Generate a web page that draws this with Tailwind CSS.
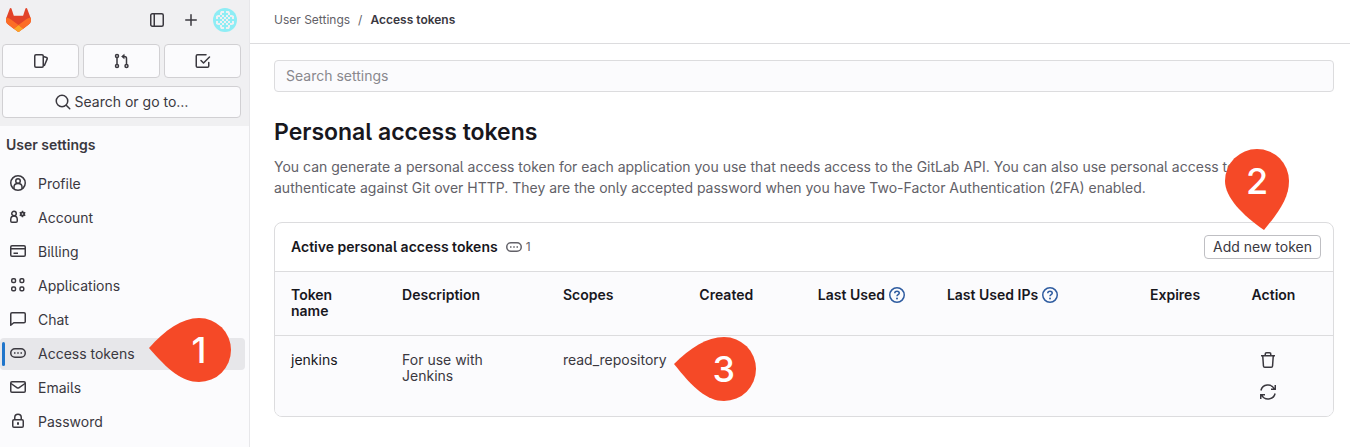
<!DOCTYPE html>
<html lang="en">
<head>
<meta charset="utf-8">
<meta name="viewport" content="width=device-width, initial-scale=1">
<title>Access tokens · User Settings · GitLab</title>
<script src="https://cdn.jsdelivr.net/npm/@tailwindcss/browser@4"></script>
</head>
<body class="bg-white font-['Inter','Liberation_Sans',sans-serif] text-sm text-[#3a383f] [font-feature-settings:'cv05']">
<div class="flex min-h-screen">

  <aside class="w-[250px] shrink-0 border-r border-[#e7e7ea] bg-[#fbfbfd]">
    <div class="flex flex-col gap-2 bg-[#f0f0f2] px-0.5 pr-2 pb-2">
      <div class="flex h-9 items-center gap-[18px] pt-1 pr-1 pl-1">
        <a href="#" aria-label="GitLab home" class="mr-auto">
          <svg class="h-6 w-[25px]" viewBox="0 0 25 24"><path d="m24.507 9.5-.034-.09L21.082.562a.896.896 0 0 0-1.694.091l-2.29 7.01H7.825L5.535.653a.898.898 0 0 0-1.694-.09L.451 9.411.416 9.5a6.297 6.297 0 0 0 2.09 7.278l.012.01.03.022 5.16 3.867 2.56 1.935 1.554 1.176a1.051 1.051 0 0 0 1.268 0l1.555-1.176 2.56-1.935 5.197-3.89.014-.01A6.297 6.297 0 0 0 24.507 9.5Z" fill="#E24329"/><path d="m24.507 9.5-.034-.09a11.44 11.44 0 0 0-4.56 2.051l-7.447 5.632 4.742 3.584 5.197-3.89.014-.01A6.297 6.297 0 0 0 24.507 9.5Z" fill="#FC6D26"/><path d="m7.707 20.677 2.56 1.935 1.555 1.176a1.051 1.051 0 0 0 1.268 0l1.555-1.176 2.56-1.935-4.743-3.584-4.755 3.584Z" fill="#FCA326"/><path d="M5.01 11.461a11.43 11.43 0 0 0-4.56-2.05L.416 9.5a6.297 6.297 0 0 0 2.09 7.278l.012.01.03.022 5.16 3.867 4.745-3.584-7.444-5.632Z" fill="#FC6D26"/></svg>
        </a>
        <button type="button" aria-label="Hide sidebar"><svg class="size-4" viewBox="0 0 16 16" fill="none" stroke="currentColor" stroke-width="1.5"><rect x="1.75" y="1.75" width="12.5" height="12.5" rx="1.5"/><path d="M5.25 2v12"/></svg></button>
        <button type="button" aria-label="Create new"><svg class="size-4" viewBox="0 0 16 16" fill="none" stroke="currentColor" stroke-width="1.5" stroke-linecap="round"><path d="M8 2.75v10.5M2.75 8h10.5"/></svg></button>
        <button type="button" aria-label="User menu" class="-ml-1">
          <svg class="size-6 rounded-full" viewBox="0 0 24 24"><path fill="#8eedf5" d="M0 0h24v24H0z"/><g fill="#f0f0f2"><path d="M8 3h3v2H9v2H7V5zM13 3h3l1 2v2h-2V5h-2zM8 21h3v-2H9v-2H7v2zM13 21h3l1-2v-2h-2v2h-2zM3 8v3h2V9h2V7H5zM3 16v-3h2v2h2v2H5zM21 8v3h-2V9h-2V7h2zM21 16v-3h-2v2h-2v2h2z"/><path d="M9 7h2v2H9zM13 7h2v2h-2zM9 15h2v2H9zM13 15h2v2h-2zM7 9h2v2H7zM15 9h2v2h-2zM7 13h2v2H7zM15 13h2v2h-2zM11 9h2v2h-2zM11 13h2v2h-2zM9 11h2v2H9zM13 11h2v2h-2z"/></g></svg>
        </button>
      </div>
      <div class="grid grid-cols-3 gap-1">
        <button type="button" aria-label="Issues" class="flex h-[34px] items-center justify-center rounded border border-[#d1d0d3] bg-[#fbfbfd]"><svg class="size-4" viewBox="0 0 16 16" fill="none" stroke="currentColor" stroke-width="1.5" stroke-linejoin="round"><rect x="1.75" y="1.75" width="8.5" height="12.5" rx="1.2"/><path d="m10.500 3.500 3 1c.6.2.9.8.7 1.400L11.200 13"/></svg></button>
        <button type="button" aria-label="Merge requests" class="flex h-[34px] items-center justify-center rounded border border-[#d1d0d3] bg-[#fbfbfd]"><svg class="size-4" viewBox="0 0 16 16" fill="none" stroke="currentColor" stroke-width="1.5"><circle cx="3" cy="3" r="1.500"/><circle cx="3" cy="13" r="1.500"/><circle cx="12.500" cy="13" r="1.500"/><path d="M3 4.500v7M12.500 11.500V5.500c0-1.100-.9-2-2-2H8.500"/><path d="M10.250 1.250v4.500L7.500 3.500Z" fill="currentColor" stroke-width=".5"/></svg></button>
        <button type="button" aria-label="To-do list" class="flex h-[34px] items-center justify-center rounded border border-[#d1d0d3] bg-[#fbfbfd]"><svg class="size-4" viewBox="0 0 16 16" fill="none" stroke="currentColor" stroke-width="1.5" stroke-linecap="round" stroke-linejoin="round"><path d="M11 1.750H2.500A1.250 1.250 0 0 0 1.250 3v10c0 .7.550 1.250 1.250 1.250h10c.7 0 1.250-.550 1.250-1.250V9.500M6 7.500l2.500 2.500L14.500 4"/></svg></button>
      </div>
      <button type="button" class="flex h-8 items-center justify-center gap-1 rounded border border-[#d1d0d3] bg-[#fbfbfd]"><svg class="size-4" viewBox="0 0 16 16" fill="none" stroke="currentColor" stroke-width="1.5" stroke-linecap="round"><circle cx="7" cy="7" r="5.750"/><path d="m11.250 11.250 3.500 3.500"/></svg>Search or go to…</button>
    </div>

    <nav aria-labelledby="nav-title" class="pr-1">
      <h2 id="nav-title" class="px-1.5 pt-[9px] pb-[13px] leading-5 font-semibold">User settings</h2>
      <ul class="flex flex-col gap-0.5">
        <li><a href="#" class="flex h-8 items-center gap-3 rounded px-2.5"><svg class="mb-0.5 size-4" viewBox="0 0 16 16" fill="none" stroke="currentColor" stroke-width="1.5"><circle cx="8" cy="8" r="7.250"/><circle cx="8" cy="6" r="2.250"/><path d="M4 13.750V12c0-2 1.500-3.500 4-3.500s4 1.500 4 3.500v1.750"/></svg>Profile</a></li>
        <li><a href="#" class="flex h-8 items-center gap-3 rounded px-2.5"><svg class="mb-0.5 size-4" viewBox="0 0 16 16" fill="none" stroke="currentColor" stroke-width="1.5"><circle cx="4" cy="4.500" r="2.250"/><path d="M4 7c-2 0-3.250 1.400-3.250 3.500v1.500c0 .7.550 1.250 1.250 1.250h4c.7 0 1.250-.550 1.250-1.250v-1.500C7.250 8.400 6 7 4 7Z"/><circle cx="12.500" cy="5" r="1.700" stroke-width="1.800"/><path stroke-width="1.500" d="M12.500 1.750v1.500M12.500 6.750v1.500M9.700 3.400l1.300.7M14 5.900l1.300.7M9.700 6.600l1.300-.7M14 4.100l1.300-.7"/></svg>Account</a></li>
        <li><a href="#" class="flex h-8 items-center gap-3 rounded px-2.5"><svg class="mb-0.5 size-4" viewBox="0 0 16 16" fill="none" stroke="currentColor" stroke-width="1.5"><rect x=".75" y="2.750" width="14.500" height="10.500" rx="1.250"/><path d="M1 5.750h14M3.500 10.250H8"/></svg>Billing</a></li>
        <li><a href="#" class="flex h-8 items-center gap-3 rounded px-2.5"><svg class="mb-0.5 size-4" viewBox="0 0 16 16" fill="none" stroke="currentColor" stroke-width="1.5"><rect x="1.750" y="1.750" width="3.750" height="3.750" rx="1.250"/><rect x="10" y="1.750" width="3.750" height="3.750" rx="1.250"/><rect x="1.750" y="10" width="3.750" height="3.750" rx="1.250"/><rect x="10" y="10" width="3.750" height="3.750" rx="1.250"/></svg>Applications</a></li>
        <li><a href="#" class="flex h-8 items-center gap-3 rounded px-2.5"><svg class="mb-0.5 size-4" viewBox="0 0 16 16" fill="none" stroke="currentColor" stroke-width="1.5" stroke-linejoin="round"><path d="M.750 14.250V3c0-.7.550-1.250 1.250-1.250h12c.7 0 1.250.550 1.250 1.250v7.500c0 .7-.550 1.250-1.250 1.250H3.750Z"/></svg>Chat</a></li>
        <li><a href="#" aria-current="page" class="relative flex h-8 items-center gap-3 rounded bg-[#e7e7ea] px-2.5"><span class="absolute inset-y-1 left-0.5 w-[3px] rounded bg-[#1f75cb]"></span><svg class="mb-0.5 size-4" viewBox="0 0 16 16" fill="none" stroke="currentColor" stroke-width="1.5"><rect x=".75" y="3.750" width="14.500" height="8.500" rx="4.250"/><path d="M4 8h1.500M7.250 8h1.500M10.500 8H12"/></svg>Access tokens</a></li>
        <li><a href="#" class="flex h-8 items-center gap-3 rounded px-2.5"><svg class="mb-0.5 size-4" viewBox="0 0 16 16" fill="none" stroke="currentColor" stroke-width="1.5" stroke-linejoin="round"><rect x=".75" y="2.750" width="14.500" height="10.500" rx="1.250"/><path d="M1 4.500 7.200 8.800c.5.300 1.100.3 1.600 0L15 4.500"/></svg>Emails</a></li>
        <li><a href="#" class="flex h-8 items-center gap-3 rounded px-2.5"><svg class="mb-0.5 size-4" viewBox="0 0 16 16" fill="none" stroke="currentColor" stroke-width="1.5"><rect x="2.750" y="6.750" width="10.500" height="7.500" rx="1.250"/><path d="M4.750 6.500V4.500a3.250 3.250 0 0 1 6.500 0v2"/><path d="M8 9.250v2.500" stroke-width="2"/></svg>Password</a></li>
      </ul>
    </nav>
  </aside>

  <main class="min-w-0 grow">
    <nav aria-label="Breadcrumb" class="flex h-11 items-center gap-2 border-b border-[#dcdcde] px-6 pb-1 text-xs">
      <a href="#" class="text-[#626168]">User Settings</a><span class="text-[#626168]">/</span><a href="#" aria-current="page" class="font-semibold">Access tokens</a>
    </nav>
    <div class="px-6 pt-4 pr-4">
      <input type="search" aria-label="Search settings" placeholder="Search settings" class="block h-8 w-full rounded border border-[#dcdcde] bg-[#fbfbfd] px-[11px] pb-0.5 placeholder:text-[#89888d]">
      <h1 class="mt-6 text-[23px] leading-8 font-semibold text-[#18171d]">Personal access tokens</h1>
      <p class="mt-2 leading-[21px] text-[#626168]">You can generate a personal access token for each application you use that needs access to the GitLab API. You can also use personal access tokens to<br>authenticate against Git over HTTP. They are the only accepted password when you have Two-Factor Authentication (2FA) enabled.</p>

      <section class="mt-6 overflow-hidden rounded-lg border border-[#dcdcde] text-[#18171d]">
        <header class="flex h-12 items-center gap-2 px-3 pl-4">
          <h2 class="font-semibold">Active personal access tokens</h2>
          <span class="mr-auto flex items-center gap-1 text-xs text-[#626168]"><svg class="size-4" viewBox="0 0 16 16" fill="none" stroke="currentColor" stroke-width="1.5"><rect x=".75" y="3.750" width="14.500" height="8.500" rx="4.250"/><path d="M4 8h1.500M7.250 8h1.500M10.500 8H12"/></svg>1</span>
          <button type="button" class="h-6 rounded border border-[#bfbfc3] bg-white px-2 text-[#3a383f]">Add new token</button>
        </header>
        <table class="w-full table-fixed border-t border-[#dcdcde] bg-[#fbfbfd] text-left leading-4">
          <colgroup><col class="w-[10.5%]"><col class="w-[15.2%]"><col class="w-[12.9%]"><col class="w-[11.2%]"><col class="w-[12.2%]"><col class="w-[19.2%]"><col class="w-[9.6%]"><col></colgroup>
          <thead>
            <tr class="h-16 border-b border-[#dcdcde] align-top *:px-4 *:pt-[15px] *:font-semibold">
              <th scope="col">Token name</th><th scope="col">Description</th><th scope="col">Scopes</th><th scope="col">Created</th>
              <th scope="col" class="whitespace-nowrap"><span class="flex items-center gap-1">Last Used <button type="button" aria-label="About last used" class="text-[#2f5ca0]"><svg class="size-4" viewBox="0 0 16 16" fill="none" stroke="currentColor" stroke-width="1.5"><circle cx="8" cy="8" r="7.250"/><path d="M5.750 6.250C5.750 5 6.700 4.250 8 4.250s2.250.8 2.250 2C10.250 7.700 8 7.700 8 9.250"/><circle cx="8" cy="11.500" r="1" fill="currentColor" stroke="none"/></svg></button></span></th>
              <th scope="col" class="whitespace-nowrap"><span class="flex items-center gap-1">Last Used IPs <button type="button" aria-label="About last used IPs" class="text-[#2f5ca0]"><svg class="size-4" viewBox="0 0 16 16" fill="none" stroke="currentColor" stroke-width="1.5"><circle cx="8" cy="8" r="7.250"/><path d="M5.750 6.250C5.750 5 6.700 4.250 8 4.250s2.250.8 2.250 2C10.250 7.700 8 7.700 8 9.250"/><circle cx="8" cy="11.500" r="1" fill="currentColor" stroke="none"/></svg></button></span></th>
              <th scope="col">Expires</th><th scope="col">Action</th>
            </tr>
          </thead>
          <tbody>
            <tr class="h-20 align-top text-[#3a383f] *:px-4 *:pt-4">
              <th scope="row" class="font-normal text-[#18171d]">jenkins</th><td>For use with Jenkins</td>
              <td><span class="relative inline-block">read_repository
                <span class="absolute -top-[15px] left-full ml-[7px] block h-16 w-[82px]"><svg class="absolute inset-0" width="82" height="64" viewBox="0 0 82 64"><path fill="#f54927" d="M0 27C16 11 33 0 50 0a32 32 0 0 1 0 64C33 64 19 51 0 27Z"/></svg><span class="absolute inset-y-0 left-[18px] flex w-16 items-center justify-center text-4xl font-medium text-white">3</span></span></span></td>
              <td></td><td></td><td></td><td></td>
              <td><div class="flex flex-col items-start gap-4 pl-2">
                <button type="button" aria-label="Revoke"><svg class="block size-4" viewBox="0 0 16 16" fill="none" stroke="currentColor" stroke-width="1.5"><path d="M1 3.750h14M5.250 3.500V2c0-.7.550-1.250 1.250-1.250h3c.7 0 1.250.550 1.250 1.250v1.500M2.750 4l.7 10c.05.7.6 1.250 1.300 1.250h6.500c.7 0 1.250-.550 1.300-1.250l.7-10"/></svg></button>
                <button type="button" aria-label="Rotate"><svg class="block size-4" viewBox="0 0 16 16" fill="none" stroke="currentColor" stroke-width="1.5"><path d="M.9 6.500A7.250 7.250 0 0 1 14.400 5M15.250 1v4.250H11M15.100 9.500A7.250 7.250 0 0 1 1.600 11M.750 15v-4.250H5"/></svg></button>
              </div></td>
            </tr>
          </tbody>
        </table>
      </section>
    </div>
  </main>
</div>

<!-- Numbered callouts over the page -->
<div class="absolute top-[318px] left-[149px] h-16 w-[82px]"><svg class="absolute inset-0" width="82" height="64" viewBox="0 0 82 64"><path fill="#f54927" d="M0 30C16 12 33 0 50 0a32 32 0 0 1 0 64C33 64 19 52 0 30Z"/></svg><span class="absolute inset-y-0 left-[18px] flex w-16 items-center justify-center text-4xl font-medium text-white">1</span></div>
<div class="absolute top-[149px] right-[61px] h-[81px] w-16"><svg class="absolute inset-0" width="64" height="81" viewBox="0 0 64 81"><path fill="#f54927" d="M39 81C17 66 0 48 0 32a32 32 0 0 1 64 0C64 48 55 62 39 81Z"/></svg><span class="absolute inset-x-0 top-0 flex h-16 items-center justify-center text-4xl font-medium text-white">2</span></div>
</body>
</html>
